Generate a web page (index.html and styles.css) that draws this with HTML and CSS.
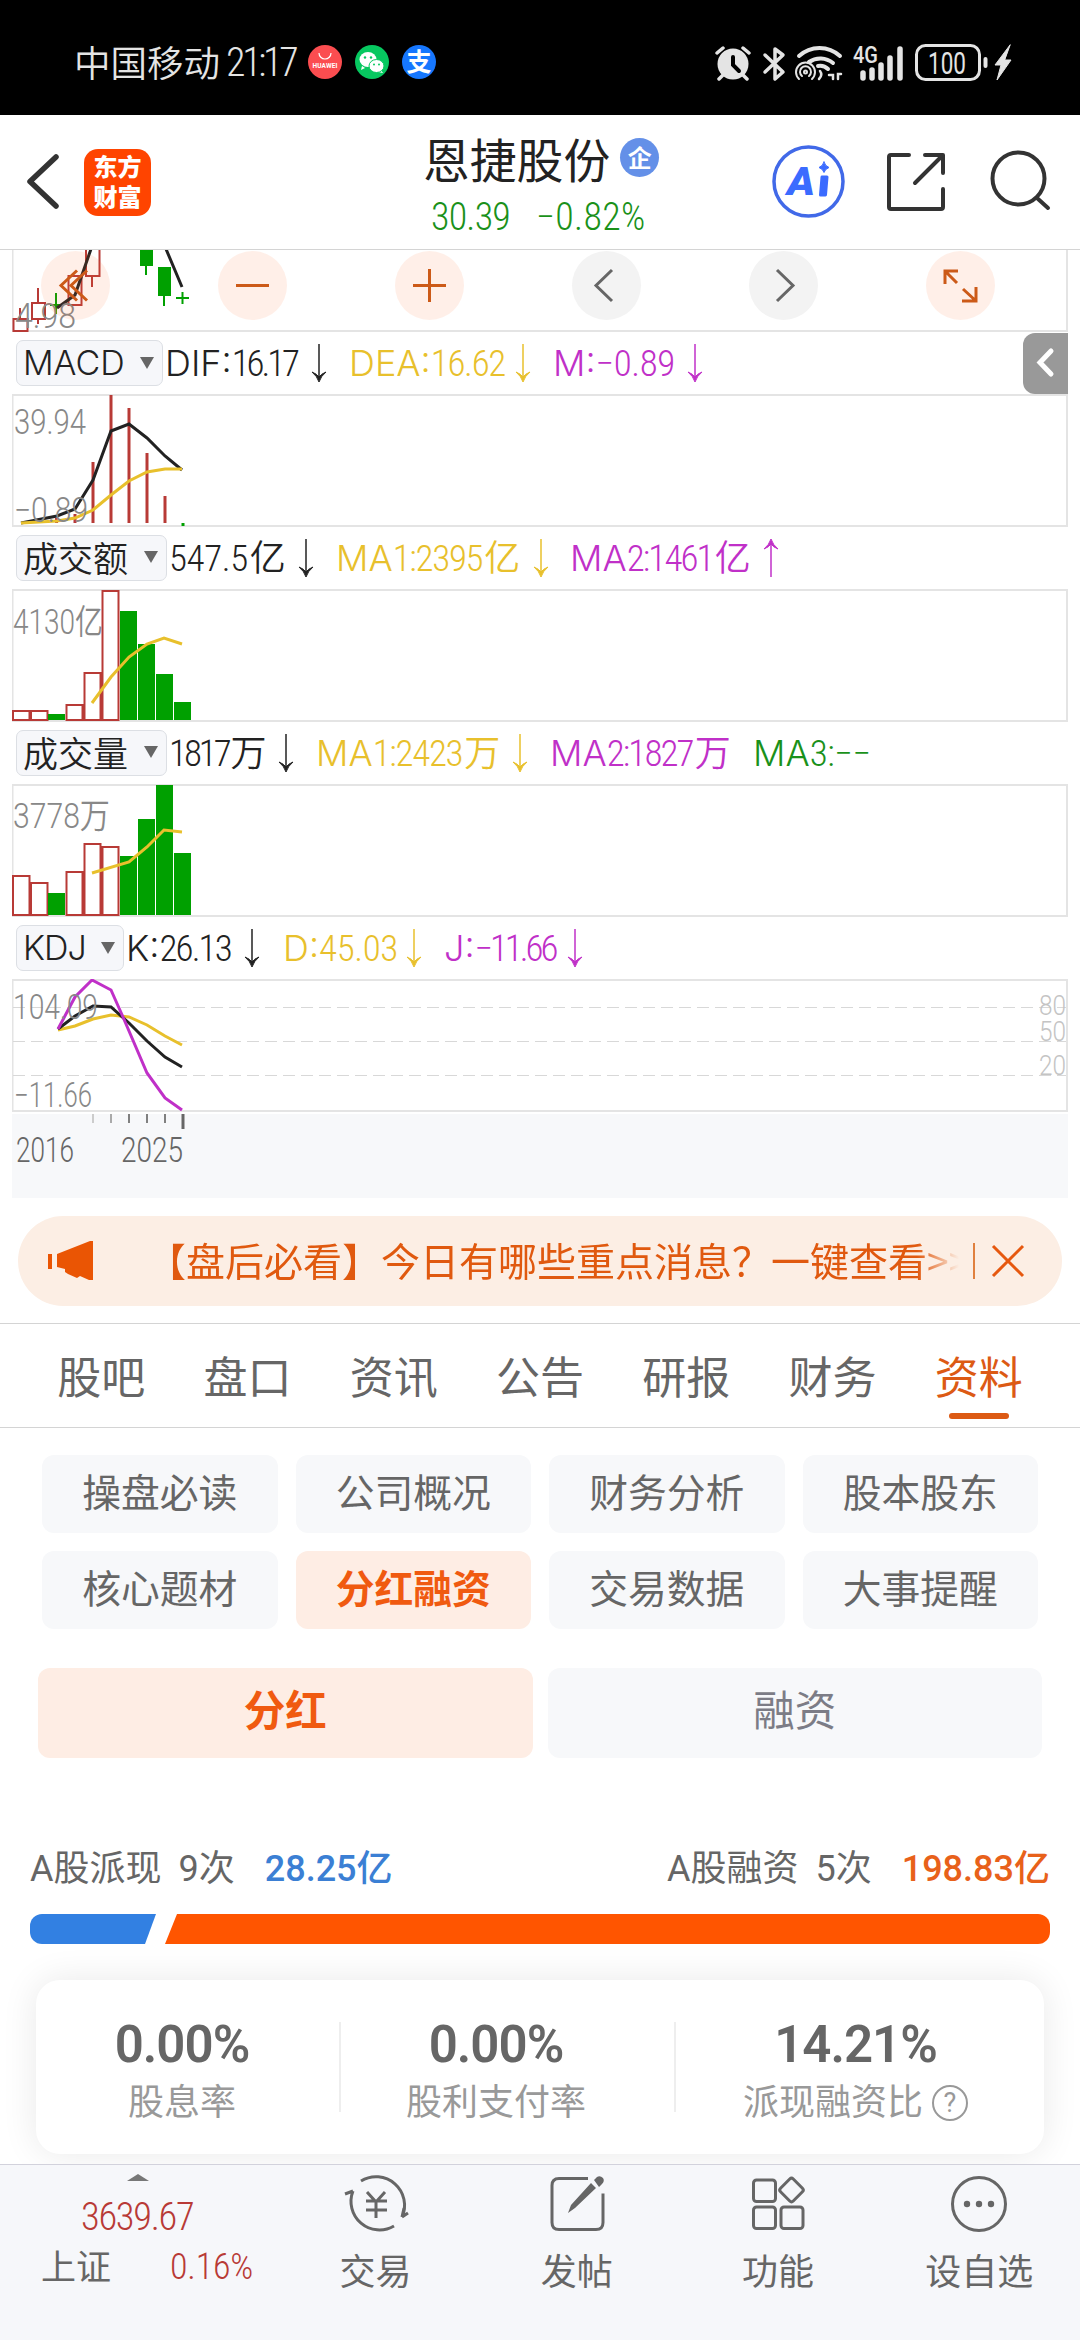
FILE: index.html
```html
<!DOCTYPE html>
<html lang="zh-CN">
	<head>
		<meta charset="UTF-8">
		<title>恩捷股份</title>
		<link rel="stylesheet" href="styles.css">
	</head>
	<body>
	  <svg class="defs">
	    <symbol id="down" viewBox="0 0 22 40">
	      <path d="M11 1V33" stroke="currentColor" stroke-width="1.5"/>
	      <path d="M4 29Q9 31 11 34Q13 31 18 29Q13 33 11 39Q9 33 4 29Z" fill="currentColor" stroke="currentColor"/>
	    </symbol>
	    <symbol id="up" viewBox="0 0 22 40">
	      <path d="M11 39V7" stroke="currentColor" stroke-width="1.5"/>
	      <path d="M4 11Q9 9 11 6Q13 9 18 11Q13 7 11 1Q9 7 4 11Z" fill="currentColor" stroke="currentColor"/>
	    </symbol>
	  </svg>
	  <div class="page">
	    <div class="status">
	      <div class="carrier">中国移动</div>
	      <div class="time">21:17</div>
	      <svg class="apps" width="130" height="36" viewBox="0 0 130 36">
	        <circle cx="17" cy="18" r="17" fill="#fb4d50"/>
	        <path d="M11 9a6 6 0 0 0 12 0" fill="none" stroke="#fff" stroke-width="1.2"/>
	        <text x="4.5" y="23.5" class="hw" textLength="25">HUAWEI</text>
	        <circle cx="64" cy="18" r="17" fill="#07c860"/>
	        <path d="M54 22l-1 4 4-2z M73 26l2 3-5-1z" fill="#fff"/>
	        <ellipse cx="60" cy="15.500" rx="8.500" ry="7.500" fill="#fff"/>
	        <ellipse cx="68.500" cy="22" rx="7.500" ry="6.500" fill="#fff" stroke="#07c860"/>
	        <circle cx="57" cy="13.500" r="1.200" fill="#07c860"/><circle cx="63" cy="13.500" r="1.200" fill="#07c860"/>
	        <circle cx="66" cy="20.500" r="1" fill="#07c860"/><circle cx="71" cy="20.500" r="1" fill="#07c860"/>
	        <circle cx="111" cy="18" r="17" fill="#1677ff"/>
	        <text x="98.500" y="27" class="zfb">支</text>
	      </svg>
	      <svg class="sys" width="300" height="40" viewBox="715 40 300 40" fill="none" stroke="#e4e4e4" stroke-width="3.500" stroke-linecap="round">
	        <circle cx="733" cy="62" r="15.500" fill="#e4e4e4" stroke="none"/>
	        <path d="M717 51l6-5M749 51l-6-5M723 73l-4 4M743 73l4 4"/>
	        <path d="M733 55v8l6 6" stroke="#000" stroke-width="4"/>
	        <path d="M765 53l18 17-8 7V47l8 6-18 17" stroke-linejoin="round"/>
	        <path d="M799 54a30 30 0 0 1 41 0M809 60a20 20 0 0 1 24 1" stroke-width="4"/>
	        <path d="M818 64q6-1 10 3" stroke-width="4"/>
	        <g stroke-width="2"><path d="M799 77a9.500 9.500 0 1 1 13 0M802 74a5.500 5.500 0 1 1 7 0"/><circle cx="805.500" cy="70" r="1.500"/></g>
	        <path d="M820 69q3 4-1 8M829 73h4v4M838 77v-5h3" stroke-width="2.500"/>
	        <text x="853" y="61" class="g4" textLength="25" lengthAdjust="spacingAndGlyphs">4G</text>
	        <path d="M863 71v5M872 68v8M881 63v13M890 56v20M900 47v29" stroke-width="5.500"/>
	        <rect x="916.500" y="43.500" width="63" height="34" rx="9" stroke-width="3"/>
	        <text x="928" y="71.500" class="bat" textLength="38" lengthAdjust="spacingAndGlyphs">100</text>
	        <path d="M985.500 57v7" stroke-width="4"/>
	        <path d="M1010 43l-15 20h6l-4 15 14-20h-6z" fill="#e4e4e4" stroke-width="1"/>
	      </svg>
	    </div>

	    <div class="head">
	      <svg class="back" width="36" height="60" viewBox="24 153 36 60"><path d="M56 158L30 182.500L56 207" fill="none" stroke="#333" stroke-width="5.500" stroke-linecap="round" stroke-linejoin="round"/></svg>
	      <div class="logo"><div>东方</div><div>财富</div></div>
	      <div class="stock">
	        <div class="name">恩捷股份<span class="qi">企</span></div>
	        <div class="price"><span>30.39</span><span>−0.82%</span></div>
	      </div>
	      <svg class="tools" width="282" height="76" viewBox="770 145 282 76" fill="none" stroke="#333" stroke-width="4" stroke-linecap="round" stroke-linejoin="round">
	        <circle cx="808.500" cy="182.500" r="34.500" stroke="#4169e8" stroke-width="3.500"/>
	        <text x="787" y="195.500" class="ai" textLength="28" lengthAdjust="spacingAndGlyphs">A</text>
	        <path d="M822 178h5l-1.500 18h-5z" fill="#3b6bff" stroke="#3b6bff" stroke-width="3"/>
	        <path d="M824 163q1 4 5 5.500q-4 1.500-5 5q-1-3.500-5-5q4-1.500 5-5.500z" fill="#3b6bff" stroke="#3b6bff" stroke-width="1"/>
	        <path d="M909 156h-18q-2 0-2 2v50q0 2 2 2h50q2 0 2-2v-18M925 156h18v18M942 157l-27 27"/>
	        <circle cx="1018.500" cy="179.500" r="26"/>
	        <path d="M1037 199l11 10"/>
	      </svg>
	    </div>

	    <div class="charts">
	      <div class="kline">
	        <svg width="1056" height="82" viewBox="12 250 1056 82" fill="none">
	          <path d="M12.500 250V331M1067 250V331M12 331H1068" class="frame"/>
	          <g class="red"><path d="M13.500 319h14v12h-14zM20 308v11M32 303h13v16H32zM38 288v15M38 319v5M68.500 276h13v29h-13zM86 245h13.500v31H86zM92 276v11"/></g>
	          <g class="green"><path d="M140 250h13v16h-13zM158 267h13v29h-13z"/><path d="M146 266v9M164 296v10M50 305h12M56 293v21M176 298h13M182.500 292v12" stroke="#00a000" stroke-width="2"/></g>
	          <path d="M57 308L75 295L91 249M166 249L182 287" class="black"/>
	          <text x="15" y="327.500" class="lab" textLength="61" lengthAdjust="spacingAndGlyphs">4.98</text>
	        </svg>
	        <div class="ops">
	          <div class="op"><svg viewBox="0 0 69 69"><path d="M36 19.500L20 34.500L36 49.500M46 19.500L30 34.500L46 49.500"/></svg></div>
	          <div class="op"><svg viewBox="0 0 69 69"><path d="M18 34.500H51"/></svg></div>
	          <div class="op"><svg viewBox="0 0 69 69"><path d="M18 34.500H51M34.500 18V51"/></svg></div>
	          <div class="op gray"><svg viewBox="0 0 69 69"><path d="M40 19L24 34.500L40 50"/></svg></div>
	          <div class="op gray"><svg viewBox="0 0 69 69"><path d="M28 19L44 34.500L28 50"/></svg></div>
	          <div class="op"><svg viewBox="0 0 69 69"><path d="M32 20H19V33M19 20L31 32M37 38L50 50M36 50H50V36"/></svg></div>
	        </div>
	      </div>

	      <div class="row">
	        <div class="pick macd">MACD<i></i></div>
	        <div class="vals v1">
	          <span>DIF:<b class="t">16.17</b></span><svg class="arr"><use href="#down"/></svg>
	          <span class="y">DEA:<b>16.62</b></span><svg class="arr y"><use href="#down"/></svg>
	          <span class="m">M:<b class="w">−0.89</b></span><svg class="arr m"><use href="#down"/></svg>
	        </div>
	        <div class="fold"><svg width="20" height="32" viewBox="0 0 20 32"><path d="M15 4L4 15.500L15 27" fill="none" stroke="#fff" stroke-width="5" stroke-linecap="round"/></svg></div>
	      </div>
	      <svg class="chart" width="1056" height="133" viewBox="12 394 1056 133" fill="none">
	        <path d="M12.500 395H1067V526H12.500z" class="frame"/>
	        <path d="M38.500 521v2M56.500 518v5M75 514v9M93 462V523M111 395V523M129 408V523M147 453V523M165 496V523" class="red stick"/>
	        <path d="M181.500 523h3v3h-3z" fill="#00a000"/>
	        <path d="M21 523L57 516L75 509L93 480L111 431L129 424L147 438L165 456L182 470" class="black"/>
	        <path d="M21 523L57 521L75 518L93 510L111 495L129 481L147 472L165 469H182" class="yellow"/>
	        <text x="14" y="433.500" class="lab" textLength="72" lengthAdjust="spacingAndGlyphs">39.94</text>
	        <text x="14" y="521.500" class="lab" textLength="74" lengthAdjust="spacingAndGlyphs">−0.89</text>
	      </svg>

	      <div class="row">
	        <div class="pick amt">成交额<i></i></div>
	        <div class="vals v2">
	          <span><b class="w">547.5</b>亿</span><svg class="arr"><use href="#down"/></svg>
	          <span class="y">MA<b>1:2395</b>亿</span><svg class="arr y"><use href="#down"/></svg>
	          <span class="m">MA<b class="n">2:1461</b>亿</span><svg class="arr m"><use href="#up"/></svg>
	        </div>
	      </div>
	      <svg class="chart" width="1056" height="133" viewBox="12 589 1056 133" fill="none">
	        <path d="M12.500 590H1067V721H12.500z" class="frame"/>
	        <g class="red"><path d="M13 711h16.500v9H13zM31 711h16.500v9H31zM66.500 705h16v15h-16zM84.500 673h16v47h-16zM102.500 591h16v129h-16z"/></g>
	        <path d="M48 714h17v6H48zM120 611h17v109h-17zM138 644h17v76h-17zM156 674h17v46h-17zM174 702h17v18h-17z" fill="#00a000"/>
	        <path d="M92 703L111 677L129 657L147 644L164 638L182 644" class="yellow"/>
	        <text x="13" y="634" class="lab" textLength="90" lengthAdjust="spacingAndGlyphs">4130亿</text>
	      </svg>

	      <div class="row">
	        <div class="pick amt">成交量<i></i></div>
	        <div class="vals v3">
	          <span><b class="t">1817</b>万</span><svg class="arr"><use href="#down"/></svg>
	          <span class="y">MA<b>1:2423</b>万</span><svg class="arr y"><use href="#down"/></svg>
	          <span class="m">MA<b class="n">2:1827</b>万</span>
	          <span class="g">MA<b class="w">3:−−</b></span>
	        </div>
	      </div>
	      <svg class="chart" width="1056" height="133" viewBox="12 784 1056 133" fill="none">
	        <path d="M12.500 785H1067V916H12.500z" class="frame"/>
	        <g class="red"><path d="M13 876h16.500v39H13zM31 883h16.500v32H31zM66.500 872h16v43h-16zM84.500 844h16v71h-16zM102.500 847h16v68h-16z"/></g>
	        <path d="M48 893h17v22H48zM120 856h17v59h-17zM138 819h17v96h-17zM156 785h17v130h-17zM174 853h17v62h-17z" fill="#00a000"/>
	        <path d="M92 873L129 862L147 847L164 830L182 832" class="yellow"/>
	        <text x="13" y="828" class="lab" textLength="97" lengthAdjust="spacingAndGlyphs">3778万</text>
	      </svg>

	      <div class="row">
	        <div class="pick kdj">KDJ<i></i></div>
	        <div class="vals v4">
	          <span>K:<b class="n">26.13</b></span><svg class="arr"><use href="#down"/></svg>
	          <span class="y">D:<b class="w">45.03</b></span><svg class="arr y"><use href="#down"/></svg>
	          <span class="m">J:<b class="t">−11.66</b></span><svg class="arr m"><use href="#down"/></svg>
	        </div>
	      </div>
	      <svg class="chart" width="1056" height="133" viewBox="12 979 1056 133" fill="none">
	        <path d="M12.500 980H1067V1111H12.500z" class="frame"/>
	        <path d="M13 1007.500H1066M13 1041.500H1066M13 1075.500H1066" stroke="#d8d8d8" stroke-dasharray="12 6"/>
	        <path d="M58 1030L75 1026L93 1019L111 1015L129 1017L147 1025L165 1036L182 1045" class="yellow"/>
	        <path d="M58 1029L75 1016L93 1006L111 1007L129 1023L147 1041L165 1057L182 1067" class="black"/>
	        <path d="M58 1029L75 997L92 980L111 990L123 1017L147 1073L165 1098L182 1110" class="mag"/>
	        <text x="13" y="1019" class="lab" textLength="85" lengthAdjust="spacingAndGlyphs">104.09</text>
	        <text x="14" y="1107" class="lab" textLength="78" lengthAdjust="spacingAndGlyphs">−11.66</text>
	        <text x="1039" y="1015" class="lv" textLength="27" lengthAdjust="spacingAndGlyphs">80</text>
	        <text x="1039" y="1041" class="lv" textLength="27" lengthAdjust="spacingAndGlyphs">50</text>
	        <text x="1039" y="1075" class="lv" textLength="27" lengthAdjust="spacingAndGlyphs">20</text>
	      </svg>
	      <svg class="axis" width="1056" height="84" viewBox="12 1114 1056 84" fill="none" stroke="#808080" stroke-width="2">
	        <path d="M93 1114v9" stroke="#ccc"/><path d="M111 1114v9" stroke="#aaa"/><path d="M129 1114v9M147 1114v9M165 1114v9"/>
	        <path d="M183 1114v15" stroke="#666" stroke-width="3"/>
	        <text x="16" y="1162" class="lab dark" textLength="58" lengthAdjust="spacingAndGlyphs">2016</text>
	        <text x="121" y="1162" class="lab dark" textLength="62" lengthAdjust="spacingAndGlyphs">2025</text>
	      </svg>
	    </div>

	    <div class="notice">
	      <svg width="48" height="40" viewBox="0 0 48 40" fill="#ea5504"><path d="M0 13h4v15H0zM9 13L42 0h3v39h-4l-9-4-3 2-9-4-3-2v-3l-8-2z"/></svg>
	      <div class="msg">【盘后必看】今日有哪些重点消息？一键查看&gt;&gt;</div>
	      <div class="bar"></div>
	      <svg width="34" height="34" viewBox="0 0 34 34"><path d="M2 2L32 32M32 2L2 32" stroke="#e6580f" stroke-width="3"/></svg>
	    </div>

	    <div class="tabs">
	      <div>股吧</div>
	      <div>盘口</div>
	      <div>资讯</div>
	      <div>公告</div>
	      <div>研报</div>
	      <div>财务</div>
	      <div class="on">资料</div>
	    </div>

	    <div class="menu">
	      <div>操盘必读</div>
	      <div>公司概况</div>
	      <div>财务分析</div>
	      <div>股本股东</div>
	      <div>核心题材</div>
	      <div class="on">分红融资</div>
	      <div>交易数据</div>
	      <div>大事提醒</div>
	    </div>
	    <div class="switch">
	      <div class="on">分红</div>
	      <div>融资</div>
	    </div>

	    <div class="sum">
	      <span>A股派现</span><span class="times">9次</span><span class="blue">28.25亿</span>
	      <span class="push">A股融资</span><span class="times">5次</span><span class="orange">198.83亿</span>
	    </div>
	    <div class="ratio"><div class="paid"></div><div class="raised"></div></div>

	    <div class="card">
	      <div class="c1"><strong>0.00%</strong><span>股息率</span></div>
	      <div class="c2"><strong>0.00%</strong><span>股利支付率</span></div>
	      <div class="c3"><strong>14.21%</strong><span>派现融资比<em>?</em></span></div>
	    </div>

	    <div class="foot">
	      <div class="index">
	        <div class="tri"></div>
	        <div class="pt">3639.67</div>
	        <div class="sz"><span>上证</span><span class="pct">0.16%</span></div>
	      </div>
	      <div class="item">
	        <svg width="66" height="62" viewBox="342 2173 66 62"><path d="M360 2181A28.500 28.500 0 0 1 401 2217M401 2217l6-4M344 2194l8-3M352 2191A28.500 28.500 0 0 0 393 2226M401 2217l2-9M366 2192l9 10 9-10M375 2202v16M365 2201h21M365 2210h21"/></svg>
	        <div>交易</div>
	      </div>
	      <div class="item">
	        <svg width="66" height="62" viewBox="544 2173 66 62"><path d="M588 2178.500h-29q-7 0-7 7v37q0 7 7 7h37q7 0 7-7v-29"/><path d="M568 2213l3-8 20-22 5 5-21 20zM594 2180l3-3q3-2 6 1 2 3-1 6l-3 3z" fill="#666" stroke="none"/></svg>
	        <div>发帖</div>
	      </div>
	      <div class="item">
	        <svg width="66" height="62" viewBox="745 2173 66 62"><rect x="753.500" y="2180" width="22" height="21.500" rx="3"/><rect x="753.500" y="2207" width="22" height="21.500" rx="3"/><rect x="781" y="2207" width="22" height="21.500" rx="3"/><rect x="782.500" y="2181" width="18" height="18" rx="2.500" transform="rotate(45 791.500 2190)"/></svg>
	        <div>功能</div>
	      </div>
	      <div class="item">
	        <svg width="66" height="62" viewBox="946 2173 66 62"><circle cx="979" cy="2204" r="26.500"/><g fill="#666" stroke="none"><circle cx="967" cy="2204" r="3.200"/><circle cx="979" cy="2204" r="3.200"/><circle cx="991" cy="2204" r="3.200"/></g></svg>
	        <div>设自选</div>
	      </div>
	    </div>
	  </div>
	</body>
</html>
```

FILE: styles.css
```css
html,body{
  padding: 0;
  margin: 0;
  overflow: hidden;
}
body {
  font-family: Roboto, "Noto Sans CJK SC", sans-serif;
  color: #666;
  background: #fff;
}
.defs {
  display: none;
}
.page {
  width: 1080px;
  height: 2340px;
  display: flex;
  flex-direction: column;
  overflow: hidden;
}
.page > div {
  box-sizing: border-box;
  flex-shrink: 0;
}
svg {
  display: block;
  flex-shrink: 0;
}

/* status bar */
.status {
  height: 115px;
  background: #000;
  color: #e4e4e4;
  display: flex;
  align-items: center;
  padding: 8px 65px 0 74px;
}
.carrier {
  width: 152px;
  font: 350 36.5px/50px "Noto Sans CJK SC", sans-serif;
}
.time {
  width: 82px;
  font-size: 40px;
  font-weight: 350;
  font-stretch: 85%;
  letter-spacing: -3.3px;
  padding-top: 2px;
}
.sys {
  margin-left: auto;
}
.hw {
  font: 700 6.5px Roboto, sans-serif;
  fill: #fff;
}
.zfb {
  font: 700 25px "Noto Sans CJK SC", sans-serif;
  fill: #fff;
}
.g4 {
  font: 500 23px Roboto, sans-serif;
  fill: #e4e4e4;
  stroke: none;
}
.bat {
  font: 400 31px Roboto, sans-serif;
  fill: #e4e4e4;
  stroke: none;
}

/* title bar */
.head {
  height: 135px;
  border-bottom: 1px solid #d4d4d4;
  display: flex;
  align-items: center;
  padding: 0 28px 0 24px;
}
.logo {
  width: 67px;
  height: 67px;
  margin-left: 24px;
  border-radius: 14px;
  background: #ff4400;
  color: #fff;
  font: 900 24px/30px "Noto Sans CJK SC", sans-serif;
  text-align: center;
  padding-top: 2px;
  box-sizing: border-box;
}
.stock {
  flex-grow: 1;
  margin-left: 272px;
}
.name {
  display: flex;
  align-items: center;
  color: #222;
  font: 400 46.8px/56px "Noto Sans CJK SC", sans-serif;
  margin-top: -3px;
}
.qi {
  width: 39px;
  height: 39px;
  margin-left: 10px;
  border-radius: 50%;
  background: #6490e8;
  color: #fff;
  font-size: 24px;
  font-weight: 700;
  line-height: 38px;
  text-align: center;
}
.price {
  display: flex;
  color: #1a911a;
  font-size: 38px;
  font-weight: 350;
  font-stretch: 85%;
  line-height: 44px;
  letter-spacing: -0.8px;
  padding: 9px 0 0 8px;
  margin-bottom: -7px;
}
.price span + span {
  margin-left: 26px;
  letter-spacing: 0.3px;
}
.ai {
  font: 900 38px Roboto, sans-serif;
  font-style: italic;
  fill: #3b6bff;
  stroke: none;
}

/* charts */
.charts {
  padding: 0 12px;
}
.frame {
  stroke: #e4e4e4;
  stroke-width: 2;
}
.red {
  stroke: #b83a36;
  stroke-width: 2;
}
.stick {
  stroke-width: 3;
}
.green {
  fill: #00a000;
}
.black {
  stroke: #222;
  stroke-width: 3;
}
.yellow {
  stroke: #e8c02c;
  stroke-width: 3;
}
.mag {
  stroke: #c030c8;
  stroke-width: 3;
}
.lab {
  font: 350 34.5px Roboto, "Noto Sans CJK SC", sans-serif;
  fill: #888;
  stroke: none;
}
.dark {
  fill: #666;
}
.lv {
  font: 350 28px Roboto, sans-serif;
  fill: #c4c4c4;
}
.kline {
  position: relative;
  height: 82px;
}
.ops {
  position: absolute;
  left: 29px;
  top: 1px;
  display: flex;
  gap: 108px;
}
.op {
  width: 69px;
  height: 69px;
  border-radius: 50%;
  background: rgba(255, 110, 50, 0.11);
}
.op path {
  fill: none;
  stroke: #cc5a18;
  stroke-width: 3;
}
.gray {
  background: #f3f3f3;
}
.gray path {
  stroke: #666;
}
.row {
  height: 62px;
  display: flex;
  align-items: center;
}
.pick {
  height: 46px;
  box-sizing: border-box;
  margin: 0 2px 0 4px;
  padding: 0 8px 0 6px;
  display: flex;
  align-items: center;
  justify-content: space-between;
  flex-shrink: 0;
  border: 1px solid #dcdfe4;
  border-radius: 7px;
  background: #f6f7fa;
  color: #222;
  font: 350 34px/44px Inter, "Noto Sans CJK SC", sans-serif;
}
.pick i {
  border: 7.5px solid transparent;
  border-top: 12px solid #666;
  border-bottom: 0;
}
.macd {
  width: 147px;
  letter-spacing: 0;
}
.amt {
  width: 151px;
  font-size: 35px;
  line-height: 41px;
  padding-bottom: 3px;
  font-family: "Noto Sans CJK SC", sans-serif;
}
.kdj {
  width: 108px;
  letter-spacing: -1px;
}
.vals {
  display: grid;
  align-items: center;
  color: #222;
  font: 350 36px/58px Inter, "Noto Sans CJK SC", sans-serif;
  white-space: nowrap;
}
.vals b {
  font-family: Roboto, sans-serif;
  font-weight: 350;
  font-stretch: 85%;
  font-size: 37px;
  letter-spacing: -1.3px;
  margin-right: 2px;
}
/* digit spacing: wide, normal, tight */
.vals .w {
  letter-spacing: -0.4px;
}
.vals .n {
  letter-spacing: -1.9px;
}
.vals .t {
  letter-spacing: -3.1px;
}
.v1 {
  grid-template-columns: 143px 41px 163px 41px 131px 22px;
}
.v2 {
  grid-template-columns: 126px 41px 194px 40px 190px 22px;
}
.v3 {
  grid-template-columns: 106px 41px 193px 41px 203px 130px;
}
.v4 {
  grid-template-columns: 115px 42px 120px 41px 120px 22px;
}
.arr {
  width: 22px;
  height: 40px;
}
.vals .y {
  color: #e8c02c;
}
.vals .m {
  color: #c030c8;
}
.vals .g {
  color: #1a911a;
}
.fold {
  width: 45px;
  height: 61px;
  margin-left: auto;
  display: flex;
  align-items: center;
  justify-content: center;
  border-radius: 12px 0 0 12px;
  background: #999;
}
.axis {
  margin-top: 2px;
  background: #f7f8fa;
}

/* notice */
.notice {
  height: 90px;
  margin: 18px 18px 17px;
  padding: 0 37px 0 30px;
  border-radius: 45px;
  background: #fceee4;
  display: flex;
  align-items: center;
}
.msg {
  width: 812px;
  margin: -5px 0 0 51px;
  overflow: hidden;
  white-space: nowrap;
  color: #e0590f;
  font: 400 39px/60px "Noto Sans CJK SC", sans-serif;
  -webkit-mask-image: linear-gradient(to right, #000 770px, transparent 812px);
  mask-image: linear-gradient(to right, #000 770px, transparent 812px);
}
.bar {
  width: 2px;
  height: 36px;
  margin: 0 16px 0 14px;
  background: #e0803f;
}

/* tabs */
.tabs {
  height: 105px;
  padding: 0 28px;
  border-top: 1px solid #d4d4d4;
  border-bottom: 1px solid #d4d4d4;
  display: flex;
}
.tabs div {
  flex: 1;
  display: flex;
  flex-direction: column;
  align-items: center;
  font: 400 44px/103px "Noto Sans CJK SC", sans-serif;
}
.tabs .on {
  color: #dc5a14;
}
.tabs .on::after {
  content: "";
  width: 60px;
  height: 6px;
  margin-top: -14px;
  border-radius: 3px;
  background: #dc5a14;
}

.menu {
  display: grid;
  grid-template-columns: repeat(4, 1fr);
  gap: 18px;
  padding: 27px 42px 0;
}
.menu div {
  height: 78px;
  border-radius: 12px;
  background: #f7f8fa;
  text-align: center;
  font: 400 38.8px/70px "Noto Sans CJK SC", sans-serif;
}
.menu .on,
.switch .on {
  background: #feede4;
  color: #f05a10;
  font-weight: 700;
}
.switch {
  display: flex;
  gap: 15px;
  padding: 39px 38px 0;
}
.switch div {
  flex: 1;
  height: 90px;
  border-radius: 12px;
  background: #f7f8fa;
  color: #7c7c86;
  text-align: center;
  font: 400 41.5px/81px "Noto Sans CJK SC", sans-serif;
}

/* dividend summary */
.sum {
  height: 156px;
  padding: 85px 30px 0;
  display: flex;
  font-size: 36px;
  line-height: 52px;
}
.times {
  margin-left: 17px;
}
.blue,
.orange {
  margin-left: 30px;
  font-weight: 500;
  color: #3b7fd4;
}
.orange {
  color: #e8611a;
}
.push {
  margin-left: auto;
}
.ratio {
  height: 30px;
  margin: 0 30px;
  border-radius: 12px;
  overflow: hidden;
  display: flex;
}
.paid {
  width: 126px;
  background: #3280e2;
  clip-path: polygon(0 0, 100% 0, 115px 100%, 0 100%);
}
.raised {
  flex-grow: 1;
  margin-left: 9px;
  background: #ff5500;
  clip-path: polygon(12px 0, 100% 0, 100% 100%, 0 100%);
}
.card {
  height: 174px;
  margin: 36px 36px 10px;
  border-radius: 24px;
  background: #fff;
  box-shadow: 0 0 36px rgba(0, 0, 0, 0.09);
  display: flex;
  align-items: center;
}
.card div {
  height: 90px;
  box-sizing: border-box;
  display: flex;
  flex-direction: column;
  align-items: center;
  border-right: 2px solid #eee;
}
.card .c1 {
  width: 305px;
  padding-right: 11px;
}
.card .c2 {
  width: 335px;
  padding-right: 23px;
}
.card .c3 {
  flex-grow: 1;
  padding-right: 9px;
  border: none;
}
.card strong {
  font-size: 51px;
  font-weight: 600;
  line-height: 46px;
  letter-spacing: -1px;
}
.card span {
  display: flex;
  align-items: center;
  color: #999;
  font: 400 36px/52px "Noto Sans CJK SC", sans-serif;
  margin-top: 5px;
}
.card em {
  width: 36px;
  height: 36px;
  box-sizing: border-box;
  margin: 7px 0 0 9px;
  border: 2.5px solid #999;
  border-radius: 50%;
  font: 400 27px/32px Roboto, sans-serif;
  text-align: center;
}

/* bottom bar */
.foot {
  height: 176px;
  border-top: 1px solid #d2d2dc;
  background: #f6f7fa;
  display: flex;
}
.index {
  width: 275px;
}
.tri {
  width: 0;
  margin: 9px 0 0 127px;
  border: 11px solid transparent;
  border-bottom: 7px solid #777;
  border-top: 0;
}
.pt {
  margin: 14px 0 0 81px;
  color: #b83a36;
  font-size: 38.5px;
  font-weight: 350;
  font-stretch: 85%;
  line-height: 44px;
  letter-spacing: -1.3px;
}
.sz {
  display: flex;
  align-items: center;
  margin: -2px 0 0 41px;
  font: 400 35px/52px "Noto Sans CJK SC", sans-serif;
}
.pct {
  margin: 4px 0 0 59px;
  color: #b83a36;
  font: 350 36px/52px Roboto, sans-serif;
  font-stretch: 85%;
  letter-spacing: -0.2px;
}
.item {
  flex: 1;
  display: flex;
  flex-direction: column;
  align-items: center;
  padding-top: 8px;
  font: 400 36px/52px "Noto Sans CJK SC", sans-serif;
}
.item svg {
  margin-bottom: 8px;
  fill: none;
  stroke: #666;
  stroke-width: 3;
}
```
